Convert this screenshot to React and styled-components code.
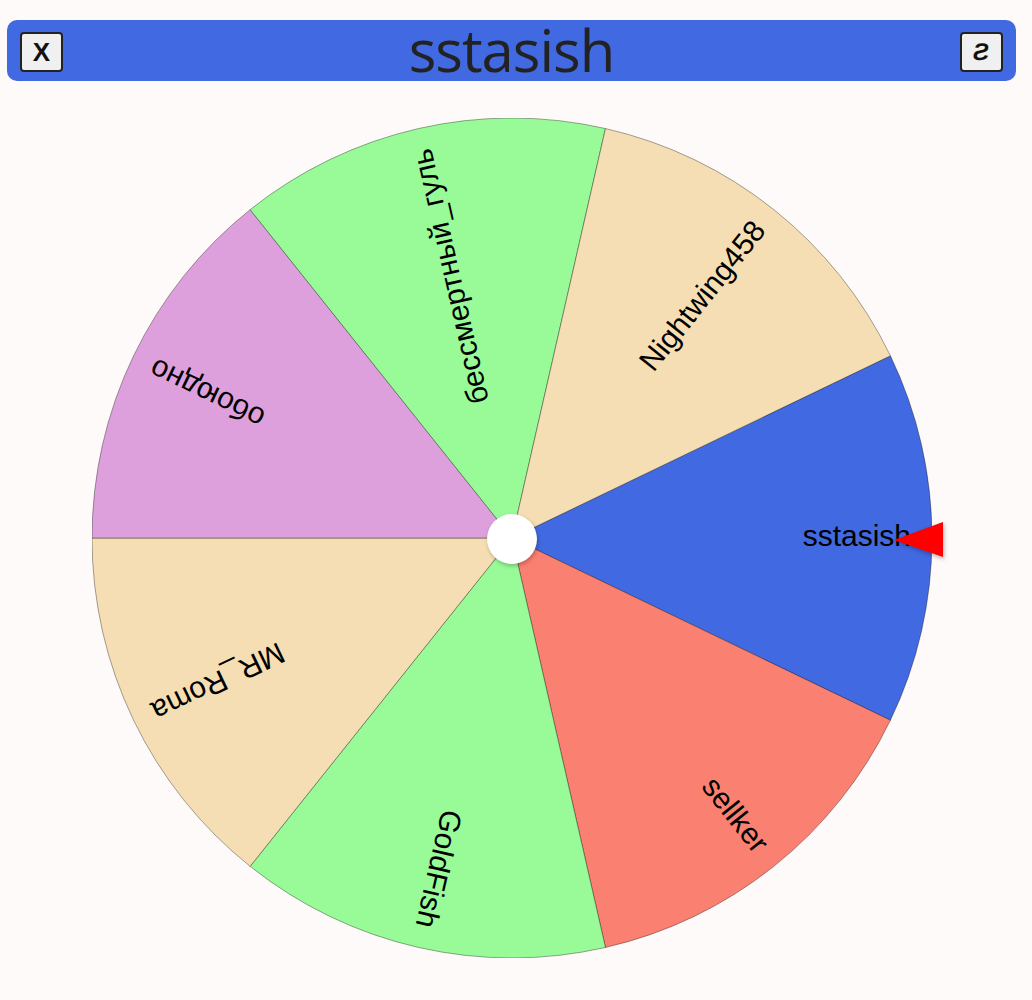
import styled, { createGlobalStyle } from "styled-components";

const GlobalStyle = createGlobalStyle`
  body {
    margin: 0;
    background: #fffafa;
    font-family: "Liberation Sans", Arial, sans-serif;
  }
`;

const Page = styled.div`
  width: 1009px;
  margin-left: 7px;
  padding-top: 20px;
`;

const Header = styled.header`
  height: 61px;
  background: #4169e1;
  border-radius: 10px;
  display: flex;
  align-items: center;
  justify-content: space-between;
  padding: 0 13px;
  box-sizing: border-box;
`;

const Title = styled.h1`
  margin: 0;
  font-family: "Open Sans", "Noto Sans", sans-serif;
  font-weight: 400;
  font-size: 58px;
  letter-spacing: -1px;
  line-height: 61px;
  color: #222;
  margin-top: -2px;
`;

const HeaderButton = styled.button`
  width: 43px;
  height: 40px;
  margin-top: 3px;
  background: #f0f0f0;
  border: 2px solid #222;
  border-radius: 4px;
  font-family: "Liberation Sans", Arial, sans-serif;
  font-weight: 700;
  font-size: ${(p) => p.$size || 26}px;
  color: #111;
  display: flex;
  align-items: center;
  justify-content: center;
  padding: 0;
  cursor: pointer;
`;

const Mirrored = styled.span`
  display: inline-block;
  transform: scaleX(-1) skewX(8deg);
`;

const WheelArea = styled.div`
  display: flex;
  justify-content: center;
  margin-top: 37px;
`;

const WheelBox = styled.div`
  position: relative;
  width: 840px;
  height: 840px;
`;

const Hub = styled.div`
  position: absolute;
  left: 395px;
  top: 396px;
  width: 50px;
  height: 50px;
  border-radius: 50%;
  background: #fff;
  box-shadow: 1px 2px 4px rgba(0, 0, 0, 0.25);
`;

const Pointer = styled.svg`
  position: absolute;
  left: 800px;
  top: 402px;
  filter: drop-shadow(1px 2px 2px rgba(0, 0, 0, 0.3));
`;

const players = [
  { name: "sstasish", color: "#4169e1" },
  { name: "sellker", color: "#fa8072" },
  { name: "GoldFish", color: "#98fb98" },
  { name: "MR_Roma", color: "#f5deb3" },
  { name: "обоюдно", color: "#dda0dd" },
  { name: "бессмертный_гуль", color: "#98fb98" },
  { name: "Nightwing458", color: "#f5deb3" },
];

const R = 420;
const C = 420;

const point = (deg) => {
  const a = (deg * Math.PI) / 180;
  return [C + R * Math.cos(a), C + R * Math.sin(a)];
};

const Wheel = () => {
  const step = 360 / players.length;
  return (
    <svg width="840" height="840" viewBox="0 0 840 840">
      {players.map((p, i) => {
        const mid = i * step;
        const [x1, y1] = point(mid - step / 2);
        const [x2, y2] = point(mid + step / 2);
        return (
          <path
            key={p.name}
            d={`M${C} ${C} L${x1} ${y1} A${R} ${R} 0 0 1 ${x2} ${y2} Z`}
            fill={p.color}
            stroke="rgba(0,0,0,0.35)"
            strokeWidth="1"
          />
        );
      })}
      {players.map((p, i) => (
        <text
          key={p.name}
          transform={`rotate(${i * step} ${C} ${C})`}
          x={C + 399}
          y={C}
          textAnchor="end"
          dominantBaseline="middle"
          fontFamily="'Liberation Sans', Arial, sans-serif"
          fontSize="30"
          fill="#000"
        >
          {p.name}
        </text>
      ))}
    </svg>
  );
};

export default function App() {
  return (
    <>
      <GlobalStyle />
      <Page>
        <Header>
          <HeaderButton title="Закрыть">X</HeaderButton>
          <Title>sstasish</Title>
          <HeaderButton $size={24}>
            <Mirrored>S</Mirrored>
          </HeaderButton>
        </Header>
        <WheelArea>
          <WheelBox>
            <Wheel />
            <Hub />
            <Pointer width="52" height="40" viewBox="0 0 52 40">
              <polygon points="2,20 51,2 51,37" fill="#ff0000" />
            </Pointer>
          </WheelBox>
        </WheelArea>
      </Page>
    </>
  );
}
